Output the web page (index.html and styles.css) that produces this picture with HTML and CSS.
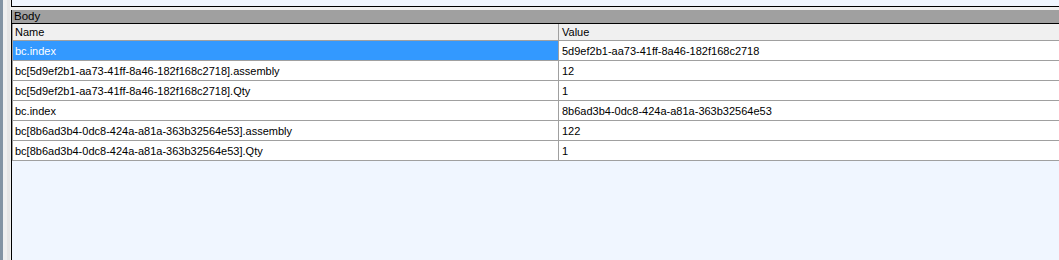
FILE: index.html
```html
<!DOCTYPE html>
<html>
<head>
<meta charset="utf-8">
<link rel="stylesheet" href="styles.css">
</head>
<body>
<div class="app">
  <div class="rail"></div>
  <div class="splitter"><div class="splitter-line"></div></div>
  <div class="main">
    <div class="top-panel"></div>
    <div class="body-section">
      <div class="section-title">Body</div>
      <div class="grid">
        <div class="row head">
          <div class="cell name">Name</div>
          <div class="cell value">Value</div>
        </div>
        <div class="row selected">
          <div class="cell name">bc.index</div>
          <div class="cell value">5d9ef2b1-aa73-41ff-8a46-182f168c2718</div>
        </div>
        <div class="row">
          <div class="cell name">bc[5d9ef2b1-aa73-41ff-8a46-182f168c2718].assembly</div>
          <div class="cell value">12</div>
        </div>
        <div class="row">
          <div class="cell name">bc[5d9ef2b1-aa73-41ff-8a46-182f168c2718].Qty</div>
          <div class="cell value">1</div>
        </div>
        <div class="row">
          <div class="cell name">bc.index</div>
          <div class="cell value">8b6ad3b4-0dc8-424a-a81a-363b32564e53</div>
        </div>
        <div class="row">
          <div class="cell name">bc[8b6ad3b4-0dc8-424a-a81a-363b32564e53].assembly</div>
          <div class="cell value">122</div>
        </div>
        <div class="row">
          <div class="cell name">bc[8b6ad3b4-0dc8-424a-a81a-363b32564e53].Qty</div>
          <div class="cell value">1</div>
        </div>
      </div>
    </div>
  </div>
</div>
</body>
</html>
```
FILE: styles.css
```css
html, body {
  margin: 0;
  padding: 0;
  height: 100%;
  overflow: hidden;
}
body {
  background: #f0f0f0;
  font-family: "Liberation Sans", Arial, sans-serif;
  font-size: 11px;
  color: #000;
}
.app {
  display: flex;
  height: 260px;
}
.rail {
  width: 3px;
  background: #8394a4;
}
.splitter {
  width: 8px;
  display: flex;
  padding-left: 4px;
  box-sizing: border-box;
}
.splitter-line {
  width: 3px;
  background: #e6e6e6;
}
.main {
  flex: 1;
  display: flex;
  flex-direction: column;
  gap: 3px;
}
.top-panel {
  height: 6px;
  background: #f0f6ff;
  border-left: 1px solid #000;
  border-bottom: 1px solid #000;
}
.body-section {
  flex: 1;
  background: #f0f6ff;
  border-left: 1px solid #000;
  display: flex;
  flex-direction: column;
}
.section-title {
  height: 13px;
  line-height: 13px;
  background: #a0a0a0;
  border-bottom: 1px solid #000;
  padding-left: 2px;
  font-size: 11.5px;
}
.grid {
  border-left: 1px solid #a0a0a0;
  display: flex;
  flex-direction: column;
}
.row {
  display: flex;
  height: 19px;
  border-bottom: 1px solid #a0a0a0;
  background: #fff;
}
.row.head {
  height: 16px;
  background: #f0f0f0;
}
.cell {
  display: flex;
  align-items: center;
  white-space: nowrap;
}
.cell.name {
  width: 543px;
  padding-left: 2px;
  border-right: 1px solid #a0a0a0;
}
.cell.value {
  flex: 1;
  padding-left: 3px;
}
.row.selected .cell.name {
  background: #3399ff;
  color: #fff;
}
```
